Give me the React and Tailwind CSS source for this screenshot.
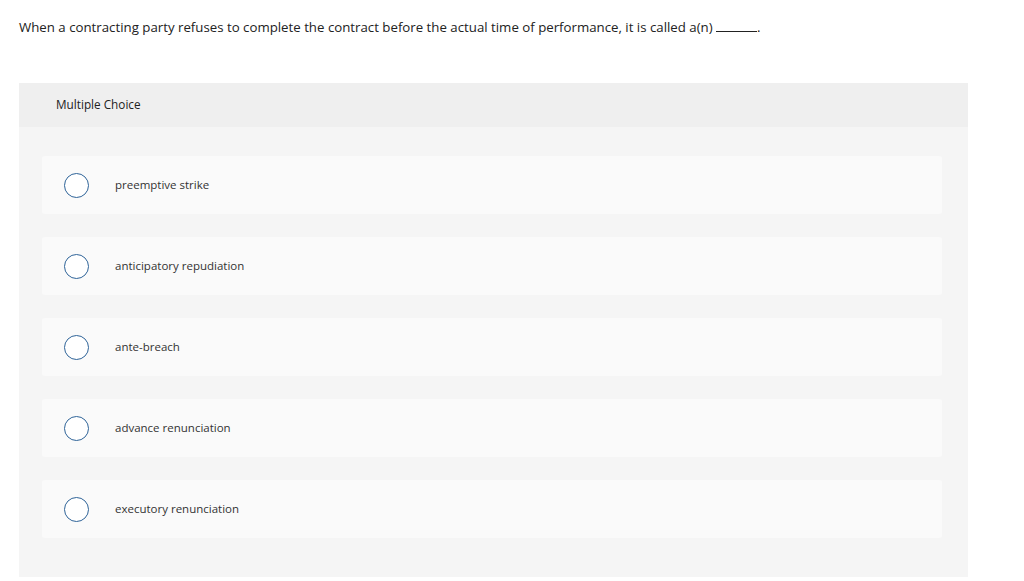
import React from 'react';

const options = [
  'preemptive strike',
  'anticipatory repudiation',
  'ante-breach',
  'advance renunciation',
  'executory renunciation',
];

function App() {
  return (
    <div className="min-h-[581px] bg-white font-['Open_Sans',sans-serif] text-[#333]">
      <p className="pl-[19px] pt-[17px] text-[13.25px] leading-[20px] text-[#222]">
        When a contracting party refuses to complete the contract before the actual time of performance, it is called a(n) <span className="inline-block w-[41px] border-b border-[#222] align-baseline"></span>.
      </p>

      <div className="ml-[19px] mt-[46px] w-[949px] bg-[#f5f5f5] pb-[39px]">
        <div className="flex h-[44px] items-center bg-[#efefef] pl-[37px] text-[11.75px] text-[#222]">
          Multiple Choice
        </div>

        <div className="flex flex-col gap-[23px] pl-[23px] pr-[26px] pt-[29px]">
          {options.map((opt) => (
            <label key={opt} className="flex h-[58px] items-center rounded-[3px] bg-[#fafafa]">
              <span className="ml-[22px] h-[25px] w-[25px] shrink-0 rounded-full border-[1.5px] border-[#2e6398] bg-white"></span>
              <span className="ml-[26px] text-[11.5px] text-[#333]">{opt}</span>
            </label>
          ))}
        </div>
      </div>
    </div>
  );
}

export default App;
